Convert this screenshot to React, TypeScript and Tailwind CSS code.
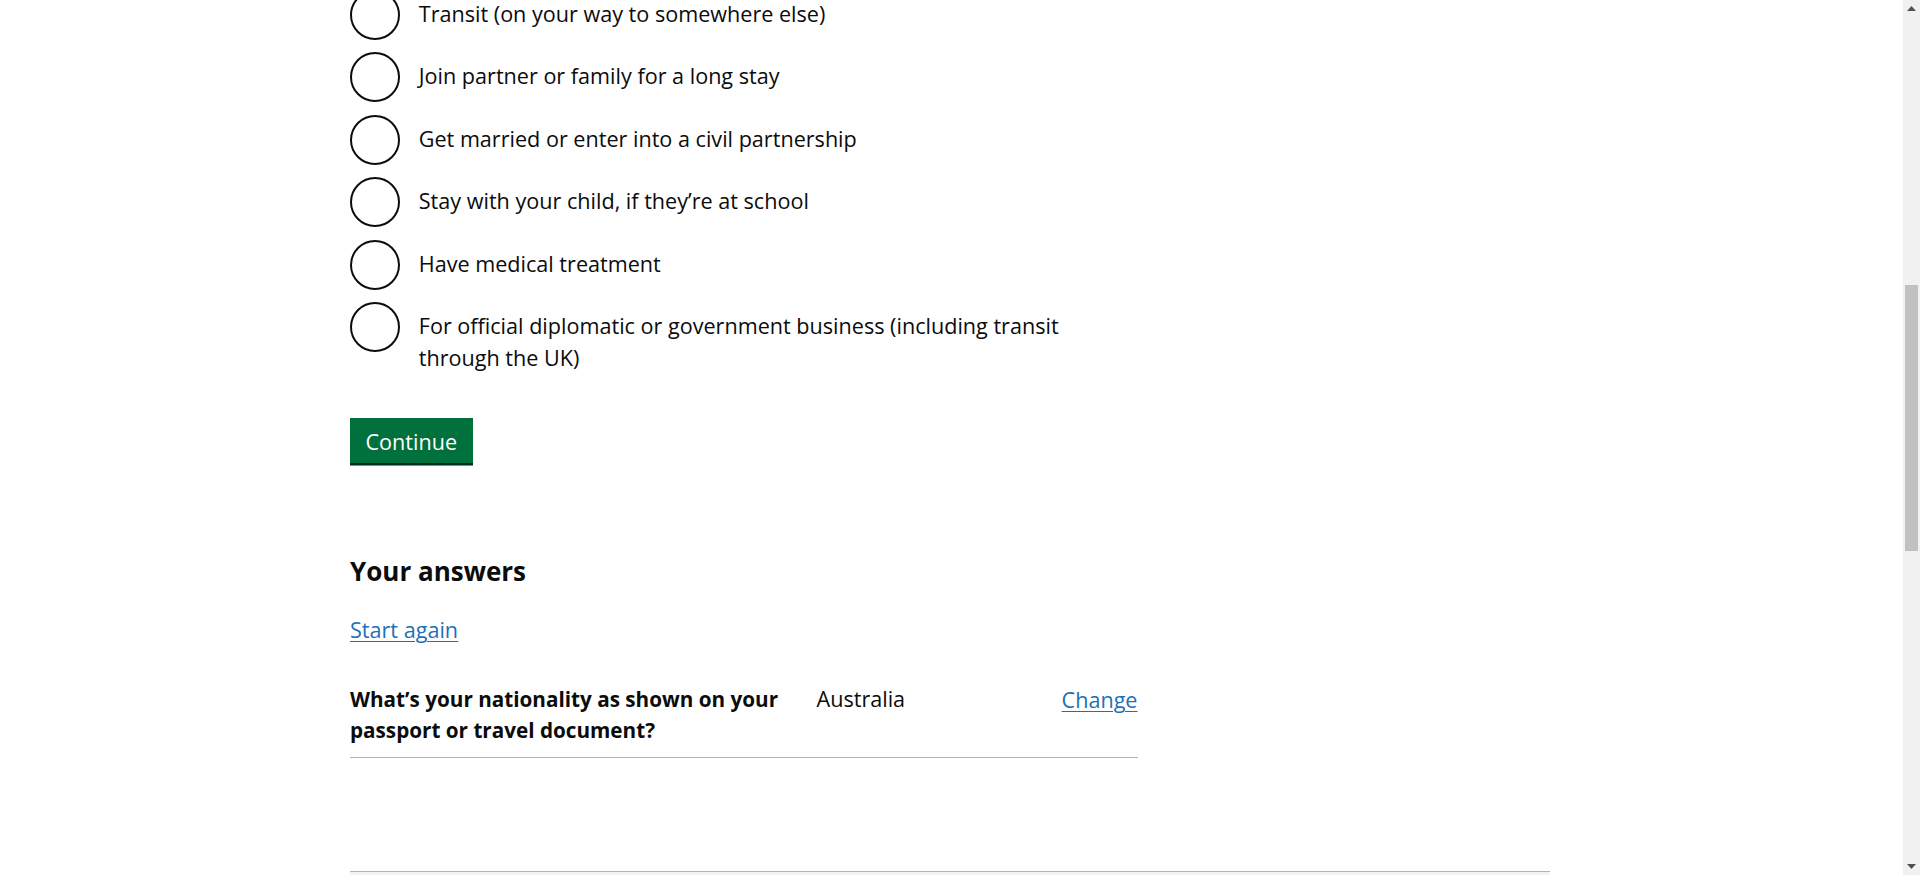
import React from "react"

const options = [
  "Transit (on your way to somewhere else)",
  "Join partner or family for a long stay",
  "Get married or enter into a civil partnership",
  "Stay with your child, if they’re at school",
  "Have medical treatment",
  "For official diplomatic or government business (including transit through the UK)",
]

function Radio({ label }: { label: string }) {
  return (
    <div className="flex items-start min-h-[50px]">
      <div className="w-[50px] h-[50px] shrink-0 rounded-full border-[2.5px] border-[#0b0c0c] bg-white"></div>
      <label className="pl-[18.75px] pr-[18.75px] pt-[8.3px] pb-[4.95px] text-[21.6px] leading-[31.25px] text-[#0b0c0c] w-[700px]">
        {label}
      </label>
    </div>
  )
}

function Scrollbar() {
  return (
    <div className="w-[17px] h-full bg-[#f1f1f1] flex flex-col shrink-0">
      <div className="h-[17px] flex items-center justify-center">
        <svg width="9" height="5" viewBox="0 0 9 5">
          <path d="M0 5 L4.5 0 L9 5 Z" fill="#505050" />
        </svg>
      </div>
      <div className="flex-1 px-[2px]">
        <div className="mt-[268px] h-[266px] bg-[#c1c1c1]"></div>
      </div>
      <div className="h-[17px] flex items-center justify-center">
        <svg width="9" height="5" viewBox="0 0 9 5">
          <path d="M0 0 L4.5 5 L9 0 Z" fill="#505050" />
        </svg>
      </div>
    </div>
  )
}

export default function App() {
  return (
    <div className="h-[875px] w-[1920px] overflow-hidden flex bg-white font-['Open_Sans',sans-serif] text-[#0b0c0c]">
      <div className="flex-1 overflow-hidden pr-[3px]">
        <div className="w-[1200px] mx-auto -mt-[10.5px]">
          <div className="w-[787.5px]">
            {/* radios, page scrolled past the question */}
            <div className="flex flex-col gap-[12.5px]">
              {options.map((o) => (
                <Radio key={o} label={o} />
              ))}
            </div>

            <button className="mt-[40px] h-[45.5px] px-[15.5px] pt-[3px] bg-[#00703c] text-white text-[21.6px] leading-none shadow-[0_2.5px_0_#002d18]">
              Continue
            </button>

            <h2 className="mt-[89.7px] text-[26px] leading-[37.5px] font-bold">Your answers</h2>

            <p className="mt-[23.7px] text-[21.6px] leading-[31.25px]">
              <a href="#" className="text-[#1d70b8] underline underline-offset-[3px] decoration-1">
                Start again
              </a>
            </p>

            <div className="mt-[25.8px] flex pt-[12.5px] pb-[11.3px] border-b border-[#b1b4b6] text-[21.6px] leading-[31.25px]">
              <div className="w-[466.5px] pr-[25px] font-bold text-[20.7px]">
                What’s your nationality as shown on your passport or travel document?
              </div>
              <div className="flex-1 -mt-[1px]">Australia</div>
              <div className="text-right">
                <a href="#" className="text-[#1d70b8] underline underline-offset-[3px] decoration-1">
                  Change
                </a>
              </div>
            </div>
          </div>

          <div className="mt-[112.5px] border-t border-[#b1b4b6] bg-[#f3f2f1] h-[60px]"></div>
        </div>
      </div>
      <Scrollbar />
    </div>
  )
}
